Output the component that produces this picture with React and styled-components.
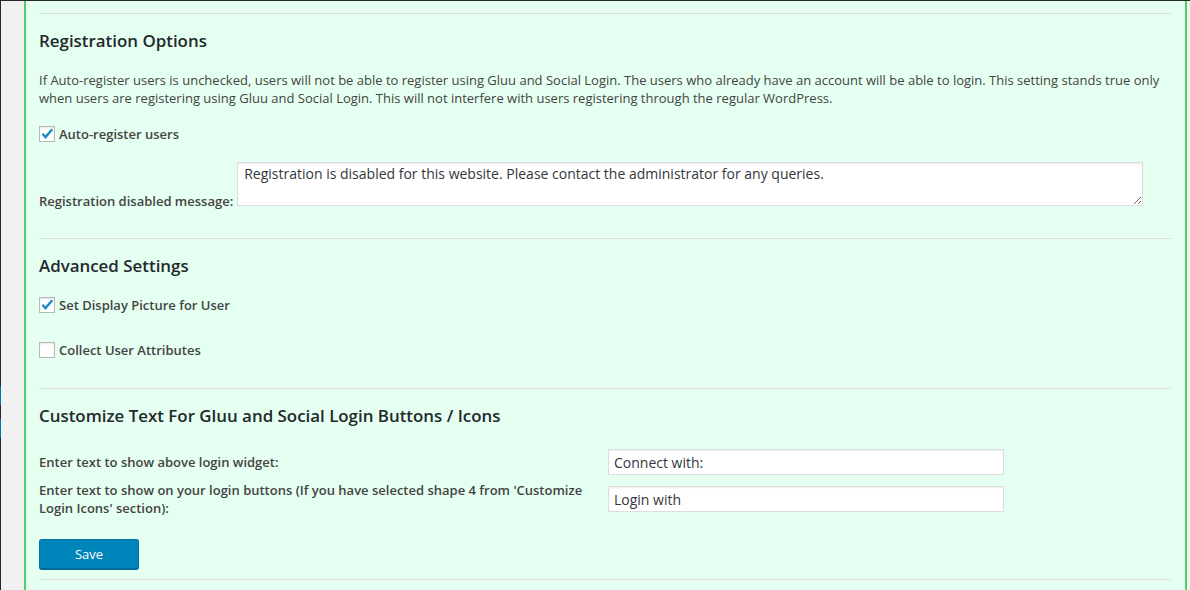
import React from 'react';
import styled, { createGlobalStyle } from 'styled-components';

const GlobalStyle = createGlobalStyle`
    html, body {
        margin: 0;
        padding: 0;
        background: #f1f1f1;
        overflow: hidden;
    }
    body {
        font-family: 'Open Sans', 'Noto Sans', sans-serif;
        font-size: 13px;
        color: #444;
    }
`

const Page = styled.div`
    display: flex;
    flex-direction: column;
    height: 590px;
    overflow: hidden;
`

const AdminBar = styled.div`
    height: 1px;
    background: #23282d;
    flex: none;
`

const Body = styled.div`
    display: flex;
    flex: 1;
    min-height: 0;
`

const MenuEdge = styled.div`
    width: 1px;
    flex: none;
    background: #23282d;
    display: flex;
    flex-direction: column;
    padding-top: 385px;
    gap: 14px;
`

const MenuMark = styled.div`
    height: 19px;
    background: #0073aa;
`

const Main = styled.div`
    flex: 1;
    padding: 0 3px 0 23px;
    min-width: 0;
`

const Panel = styled.div`
    background: #e5fff0;
    border-left: 2px solid #4fcf6a;
    border-right: 2px solid #4fcf6a;
    height: 100%;
    padding: 12px 14px 0 13px;
    box-sizing: border-box;
`

const Rule = styled.hr`
    border: 0;
    border-top: 1px solid #dcdcdc;
    margin: 0;
`

const Section = styled.section`
    padding: ${p => p.$pad || '0'};
`

const Heading = styled.h3`
    font-size: 16.9px;
    font-weight: 600;
    color: #23282d;
    line-height: 24px;
    margin: 0 0 ${p => p.$gap || 0}px;
`

const Description = styled.p`
    margin: 0;
    line-height: 18px;
    max-width: 1125px;
`

const CheckRow = styled.label`
    display: flex;
    align-items: center;
    gap: 4px;
    font-weight: 600;
    height: 18px;
    margin-top: ${p => p.$top || 0}px;
`

const Box = styled.span`
    width: 14px;
    height: 14px;
    border: 1px solid #b4b9be;
    background: #fff;
    box-shadow: inset 0 1px 2px rgba(0, 0, 0, 0.1);
    display: flex;
    align-items: center;
    justify-content: center;
    flex: none;
`

const FieldRow = styled.div`
    display: flex;
    align-items: flex-end;
    gap: 4px;
    margin-top: ${p => p.$top || 0}px;
`

const FieldLabel = styled.span`
    font-weight: 600;
    line-height: 18px;
    margin-bottom: -4px;
`

const Area = styled.textarea`
    width: 906px;
    height: 44px;
    box-sizing: border-box;
    border: 1px solid #ddd;
    box-shadow: inset 0 1px 2px rgba(0, 0, 0, 0.07);
    font-family: 'Open Sans', 'Noto Sans', sans-serif;
    font-size: 14px;
    color: #32373c;
    padding: 1px 6px;
    line-height: 20px;
    margin: 0;
`

const Grid = styled.div`
    display: grid;
    grid-template-columns: 569px 396px;
    row-gap: 6px;
    align-items: center;
    margin-top: ${p => p.$top || 0}px;
`

const GridLabel = styled.span`
    font-weight: 600;
    line-height: 18px;
    padding-right: 20px;
`

const TextInput = styled.input`
    box-sizing: border-box;
    width: 396px;
    height: 26px;
    border: 1px solid #ddd;
    box-shadow: inset 0 1px 2px rgba(0, 0, 0, 0.07);
    font-family: 'Open Sans', 'Noto Sans', sans-serif;
    font-size: 14px;
    color: #32373c;
    padding: 0 5px;
    margin: 0;
`

const SaveButton = styled.button`
    display: block;
    width: 100px;
    height: 30px;
    margin-top: ${p => p.$top || 0}px;
    background: #0085ba;
    border: 1px solid #0073aa;
    border-bottom-color: #006799;
    box-shadow: 0 1px 0 #006799;
    border-radius: 3px;
    color: #fff;
    font-family: 'Open Sans', 'Noto Sans', sans-serif;
    font-size: 13px;
    padding: 0 0 1px;
    cursor: pointer;
`

function Check({ checked }) {
    return (
        <Box>
            {checked && (
                <svg width="14" height="14" viewBox="0 0 14 14">
                    <path d="M1.6 7.4 L3.3 5.9 L5.4 8.2 L11.4 1.6 L13.2 3.1 L5.5 11.9 Z" fill="#1e8cbe" />
                </svg>
            )}
        </Box>
    );
}

export default function App() {
    return (
        <>
            <GlobalStyle />
            <Page>
                <AdminBar />
                <Body>
                    <MenuEdge>
                        <MenuMark />
                        <MenuMark />
                    </MenuEdge>
                    <Main>
                        <Panel>
                            <Rule />
                            <Section $pad="15px 0 32px">
                                <Heading $gap={18}>Registration Options</Heading>
                                <Description>
                                    If Auto-register users is unchecked, users will not be able to register using Gluu and Social Login. The users who already have an account will be able to login. This setting stands true only when users are registering using Gluu and Social Login. This will not interfere with users registering through the regular WordPress.
                                </Description>
                                <CheckRow $top={18}>
                                    <Check checked />
                                    Auto-register users
                                </CheckRow>
                                <FieldRow $top={19}>
                                    <FieldLabel>Registration disabled message:</FieldLabel>
                                    <Area defaultValue="Registration is disabled for this website. Please contact the administrator for any queries." />
                                </FieldRow>
                            </Section>
                            <Rule />
                            <Section $pad="15px 0 29px">
                                <Heading $gap={18}>Advanced Settings</Heading>
                                <CheckRow>
                                    <Check checked />
                                    Set Display Picture for User
                                </CheckRow>
                                <CheckRow $top={27}>
                                    <Check />
                                    Collect User Attributes
                                </CheckRow>
                            </Section>
                            <Rule />
                            <Section $pad="15px 0 10px">
                                <Heading>Customize Text For Gluu and Social Login Buttons / Icons</Heading>
                                <Grid $top={21}>
                                    <GridLabel>Enter text to show above login widget:</GridLabel>
                                    <TextInput defaultValue="Connect with:" />
                                    <GridLabel>Enter text to show on your login buttons (If you have selected shape 4 from 'Customize Login Icons' section):</GridLabel>
                                    <TextInput defaultValue="Login with" />
                                </Grid>
                                <SaveButton $top={22}>Save</SaveButton>
                            </Section>
                            <Rule />
                        </Panel>
                    </Main>
                </Body>
            </Page>
        </>
    );
}
